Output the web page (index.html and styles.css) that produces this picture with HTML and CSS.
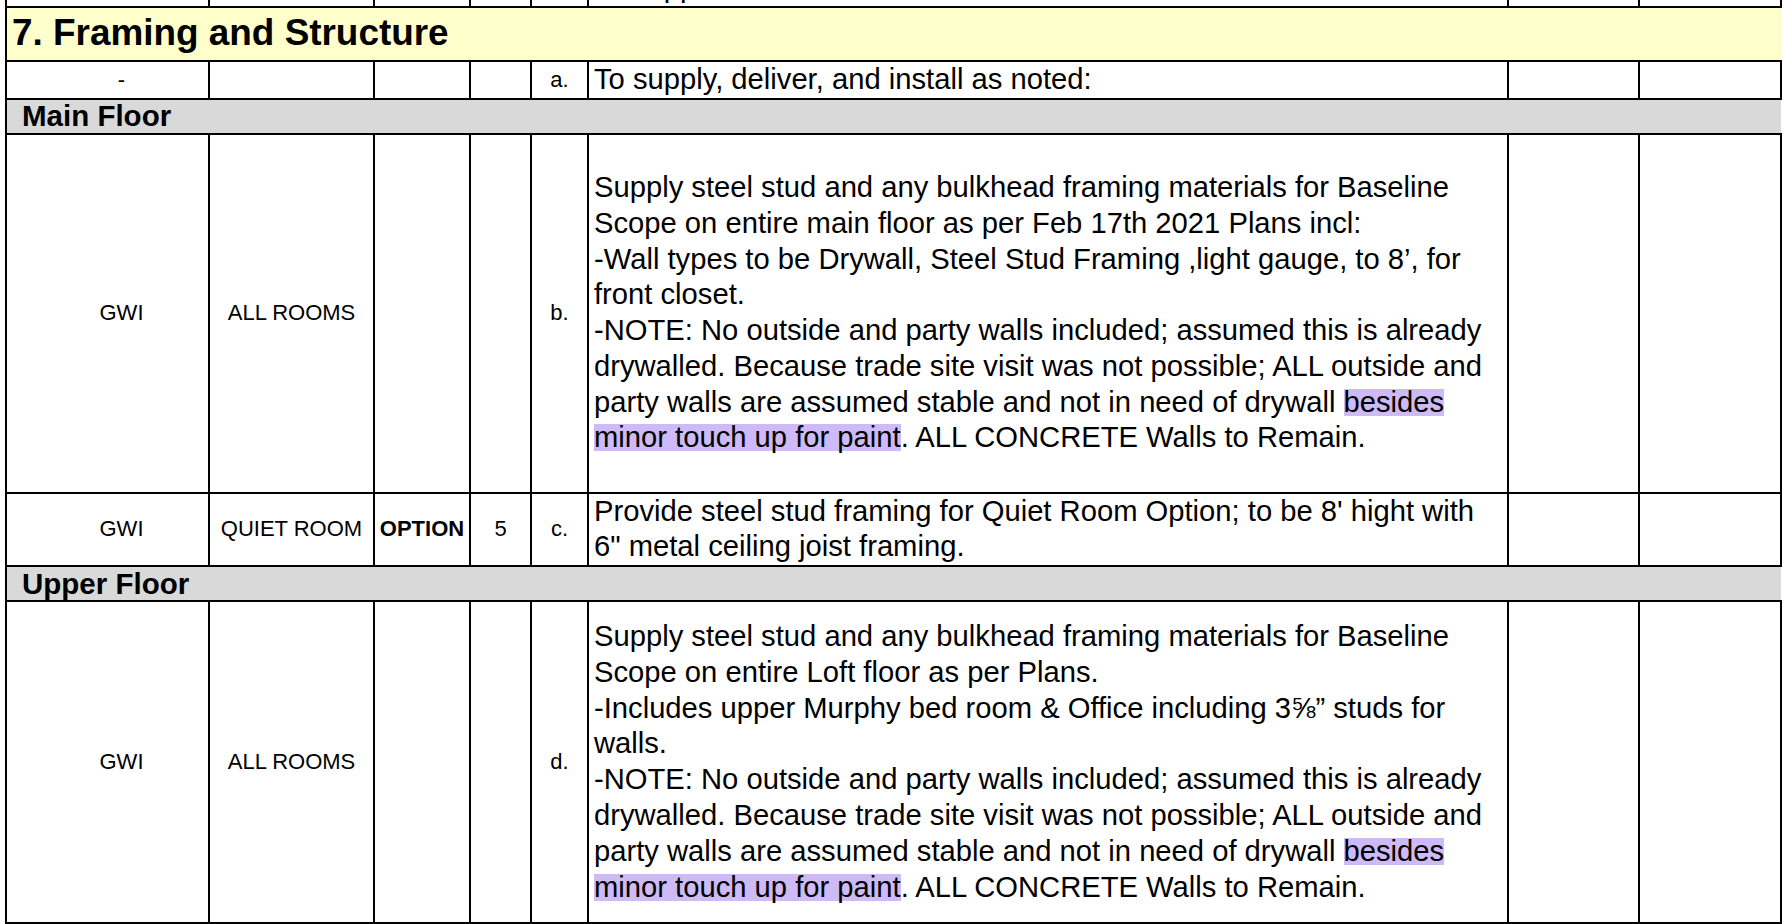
FILE: index.html
```
<!DOCTYPE html>
<html lang="en">
<head>
<meta charset="utf-8">
<title>Framing and Structure</title>
<link rel="stylesheet" href="styles.css">
</head>
<body>
<div class="sheet">
<table class="grid">
<colgroup>
<col class="c-trade"><col class="c-room"><col class="c-opt"><col class="c-num"><col class="c-item"><col class="c-desc"><col class="c-x"><col class="c-y">
</colgroup>
<tbody>
<tr class="r-prev">
<td class="sm first"></td><td class="sm"></td><td class="sm"></td><td class="sm"></td><td class="sm"></td>
<td class="desc">To supp</td><td></td><td></td>
</tr>
<tr class="r-title">
<td colspan="8" class="title">7. Framing and Structure</td>
</tr>
<tr class="r-a">
<td class="sm first">-</td><td class="sm"></td><td class="sm"></td><td class="sm"></td><td class="sm">a.</td>
<td class="desc">To supply, deliver, and install as noted:</td><td></td><td></td>
</tr>
<tr class="r-section">
<td colspan="8" class="section">Main Floor</td>
</tr>
<tr class="r-b">
<td class="sm first">GWI</td><td class="sm">ALL ROOMS</td><td class="sm"></td><td class="sm"></td><td class="sm">b.</td>
<td class="desc">Supply steel stud and any bulkhead framing materials for Baseline<br>Scope on entire main floor as per Feb 17th 2021 Plans incl:<br>-Wall types to be Drywall, Steel Stud Framing ,light gauge, to 8’, for<br>front closet.<br>-NOTE: No outside and party walls included; assumed this is already<br>drywalled. Because trade site visit was not possible; ALL outside and<br>party walls are assumed stable and not in need of drywall <span class="hl">besides</span><br><span class="hl">minor touch up for paint</span>. ALL CONCRETE Walls to Remain.</td>
<td></td><td></td>
</tr>
<tr class="r-c">
<td class="sm first">GWI</td><td class="sm">QUIET ROOM</td><td class="sm strong">OPTION</td><td class="sm">5</td><td class="sm">c.</td>
<td class="desc">Provide steel stud framing for Quiet Room Option; to be 8' hight with<br>6" metal ceiling joist framing.</td>
<td></td><td></td>
</tr>
<tr class="r-section">
<td colspan="8" class="section">Upper Floor</td>
</tr>
<tr class="r-d">
<td class="sm first">GWI</td><td class="sm">ALL ROOMS</td><td class="sm"></td><td class="sm"></td><td class="sm">d.</td>
<td class="desc">Supply steel stud and any bulkhead framing materials for Baseline<br>Scope on entire Loft floor as per Plans.<br>-Includes upper Murphy bed room &amp; Office including 3⅝” studs for<br>walls.<br>-NOTE: No outside and party walls included; assumed this is already<br>drywalled. Because trade site visit was not possible; ALL outside and<br>party walls are assumed stable and not in need of drywall <span class="hl">besides</span><br><span class="hl">minor touch up for paint</span>. ALL CONCRETE Walls to Remain.</td>
<td></td><td></td>
</tr>
<tr class="r-next">
<td></td><td></td><td></td><td></td><td></td><td></td><td></td><td></td>
</tr>
</tbody>
</table>
</div>
</body>
</html>
```
FILE: styles.css
```
html, body {
  margin: 0;
  padding: 0;
  background: #ffffff;
  overflow: hidden;
}
body {
  font-family: "Liberation Sans", Arial, sans-serif;
  color: #000;
}
.sheet {
  padding-left: 5px;
  height: 924px;
  overflow: hidden;
}
.grid {
  border-collapse: collapse;
  table-layout: fixed;
  width: 1777px;
  margin-top: -32px;
}
.c-trade { width: 203px; }
.c-room { width: 165px; }
.c-opt { width: 96px; }
.c-num { width: 61px; }
.c-item { width: 57px; }
.c-desc { width: 920px; }
.c-x { width: 131px; }
.c-y { width: 142px; }

.grid td {
  border: 2px solid #000;
  padding: 0;
  vertical-align: middle;
  overflow: hidden;
}
.sm {
  font-size: 22px;
  text-align: center;
  white-space: nowrap;
}
.grid .first { padding-left: 28px; }
.strong { font-weight: bold; }
.desc {
  font-size: 29.2px;
  line-height: 35.8px;
  padding-left: 5px !important;
  white-space: nowrap;
  text-align: left;
}
.r-prev td { height: 34px; }
.r-prev .desc { vertical-align: top; }
.r-title td { height: 52px; }
.r-a td { height: 33px; }
.r-section td { height: 33px; }
.r-b td { height: 357px; }
.r-c td { height: 69px; }
.r-d td { height: 320px; }
.r-next td { height: 30px; }

.grid .title {
  background: #ffffcc;
  font-size: 36.9px;
  font-weight: bold;
  padding-left: 5px;
  border-right: none;
  line-height: 1;
}
.grid .section {
  background: #d9d9d9;
  font-size: 29.5px;
  font-weight: bold;
  padding-left: 15px;
  border-right: none;
  line-height: 1;
}
.hl {
  background-image: linear-gradient(to bottom, transparent 3px, #cdbaf6 3px, #cdbaf6 calc(100% - 2px), transparent calc(100% - 2px));
}
```
